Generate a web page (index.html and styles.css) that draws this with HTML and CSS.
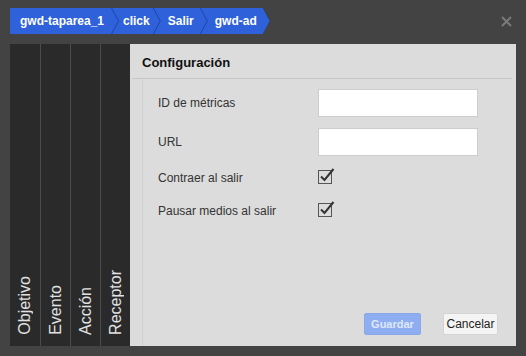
FILE: index.html
```html
<!DOCTYPE html>
<html lang="es">
<head>
    <meta charset="UTF-8">
    <title>Configuración</title>
    <link rel="stylesheet" href="styles.css">
</head>
<body>
    <div class="topbar">
        <div class="crumbs">
            <span class="crumb first">gwd-taparea_1</span>
            <span class="crumb second">click</span>
            <span class="crumb">Salir</span>
            <span class="crumb">gwd-ad</span>
        </div>
        <svg class="close" width="11" height="11" viewBox="0 0 11 11">
            <path d="M1 1 L10 10 M10 1 L1 10" stroke="#7a7a7a" stroke-width="2"/>
        </svg>
    </div>

    <div class="dialog">
        <div class="tabs">
            <div class="tab"><span>Objetivo</span></div>
            <div class="tab"><span>Evento</span></div>
            <div class="tab"><span>Acción</span></div>
            <div class="tab"><span>Receptor</span></div>
        </div>

        <div class="panel">
            <div class="panel-title">Configuración</div>
            <div class="panel-body">
                <div class="form">
                    <label class="row-label">ID de métricas</label>
                    <div class="field"><input type="text"></div>

                    <label class="row-label">URL</label>
                    <div class="field"><input type="text"></div>

                    <label class="row-label">Contraer al salir</label>
                    <div class="field">
                        <svg class="check" width="18" height="17" viewBox="0 0 18 17">
                            <rect x="0.5" y="3.5" width="13" height="13" fill="none" stroke="#555"/>
                            <path d="M3 9.5 L6.5 13 L15.5 2" fill="none" stroke="#333" stroke-width="2"/>
                        </svg>
                    </div>

                    <label class="row-label">Pausar medios al salir</label>
                    <div class="field">
                        <svg class="check" width="18" height="17" viewBox="0 0 18 17">
                            <rect x="0.5" y="3.5" width="13" height="13" fill="none" stroke="#555"/>
                            <path d="M3 9.5 L6.5 13 L15.5 2" fill="none" stroke="#333" stroke-width="2"/>
                        </svg>
                    </div>
                </div>

                <div class="buttons">
                    <button class="btn save">Guardar</button>
                    <button class="btn cancel">Cancelar</button>
                </div>
            </div>
        </div>
    </div>
</body>
</html>
```

FILE: styles.css
```css
body {
    margin: 0;
    width: 526px;
    height: 356px;
    background-color: #434343;
    font-family: "Liberation Sans", Arial, sans-serif;
    overflow: hidden;
}

.topbar {
    display: flex;
    align-items: center;
    justify-content: space-between;
    height: 26px;
    padding: 8px 14px 10px 10px;
}

/* breadcrumb, dark blue shows through the gaps */
.crumbs {
    display: flex;
    height: 26px;
    background-color: #1d46ab;
    clip-path: polygon(0 0, calc(100% - 7px) 0, 100% 50%, calc(100% - 7px) 100%, 0 100%);
}

.crumb {
    display: flex;
    align-items: center;
    height: 26px;
    padding: 0 13px 0 14px;
    margin-left: -6px;
    background-color: #2f62da;
    color: #fff;
    font-size: 12px;
    font-weight: bold;
    clip-path: polygon(0 0, calc(100% - 7px) 0, 100% 50%, calc(100% - 7px) 100%, 0 100%, 7px 50%);
}

.crumb.first {
    margin-left: 0;
    padding-left: 10px;
    padding-right: 14px;
    clip-path: polygon(0 0, calc(100% - 7px) 0, 100% 50%, calc(100% - 7px) 100%, 0 100%);
}

.crumb.second {
    padding-left: 11px;
    padding-right: 10px;
}

.close {
    display: block;
}

.dialog {
    display: flex;
    margin-left: 10px;
    width: 506px;
    height: 302px;
}

.tabs {
    display: flex;
    flex-shrink: 0;
}

.tab {
    width: 30px;
    background-color: #2a2a2a;
    border-left: 1px solid #4c4c4c;
    display: flex;
    align-items: flex-end;
    justify-content: center;
    padding-bottom: 11px;
    box-sizing: border-box;
}

.tab:first-child {
    border-left: none;
}

.tab span {
    writing-mode: vertical-rl;
    transform: rotate(180deg);
    color: #e2e2e2;
    font-size: 16px;
}

.panel {
    flex: 1;
    min-width: 0;
    display: flex;
    flex-direction: column;
    background-color: #dcdcdc;
}

.panel-title {
    height: 34px;
    line-height: 38px;
    margin: 0 4px 0 2px;
    padding-left: 10px;
    border-bottom: 1px solid #c6c6c6;
    font-size: 13px;
    font-weight: bold;
    color: #111;
}

.panel-body {
    flex: 1;
    display: flex;
    flex-direction: column;
    justify-content: space-between;
    margin-left: 12px;
    border-left: 1px solid #d0d0d0;
    padding: 10px 18px 11px 15px;
}

.form {
    display: grid;
    grid-template-columns: 160px 160px;
    grid-template-rows: 28px 28px 22px 22px;
    row-gap: 11px;
    align-items: center;
}

.row-label {
    font-size: 12px;
    color: #333;
}

.field input {
    display: block;
    width: 160px;
    height: 28px;
    box-sizing: border-box;
    border: 1px solid #cdcdcd;
    background-color: #fff;
    margin: 0;
}

.check {
    display: block;
    margin-top: -5px;
}

.buttons {
    display: flex;
    justify-content: flex-end;
    gap: 22px;
}

.btn {
    height: 22px;
    padding: 0;
    font-family: "Liberation Sans", Arial, sans-serif;
    border-radius: 2px;
}

.save {
    width: 57px;
    background-color: #8eaef1;
    border: 1px solid #8aa9ea;
    color: #dfe8fb;
    font-size: 11px;
    font-weight: bold;
}

.cancel {
    width: 55px;
    background-color: #f4f4f4;
    border: 1px solid #d4d4d4;
    color: #222;
    font-size: 12px;
}
```
